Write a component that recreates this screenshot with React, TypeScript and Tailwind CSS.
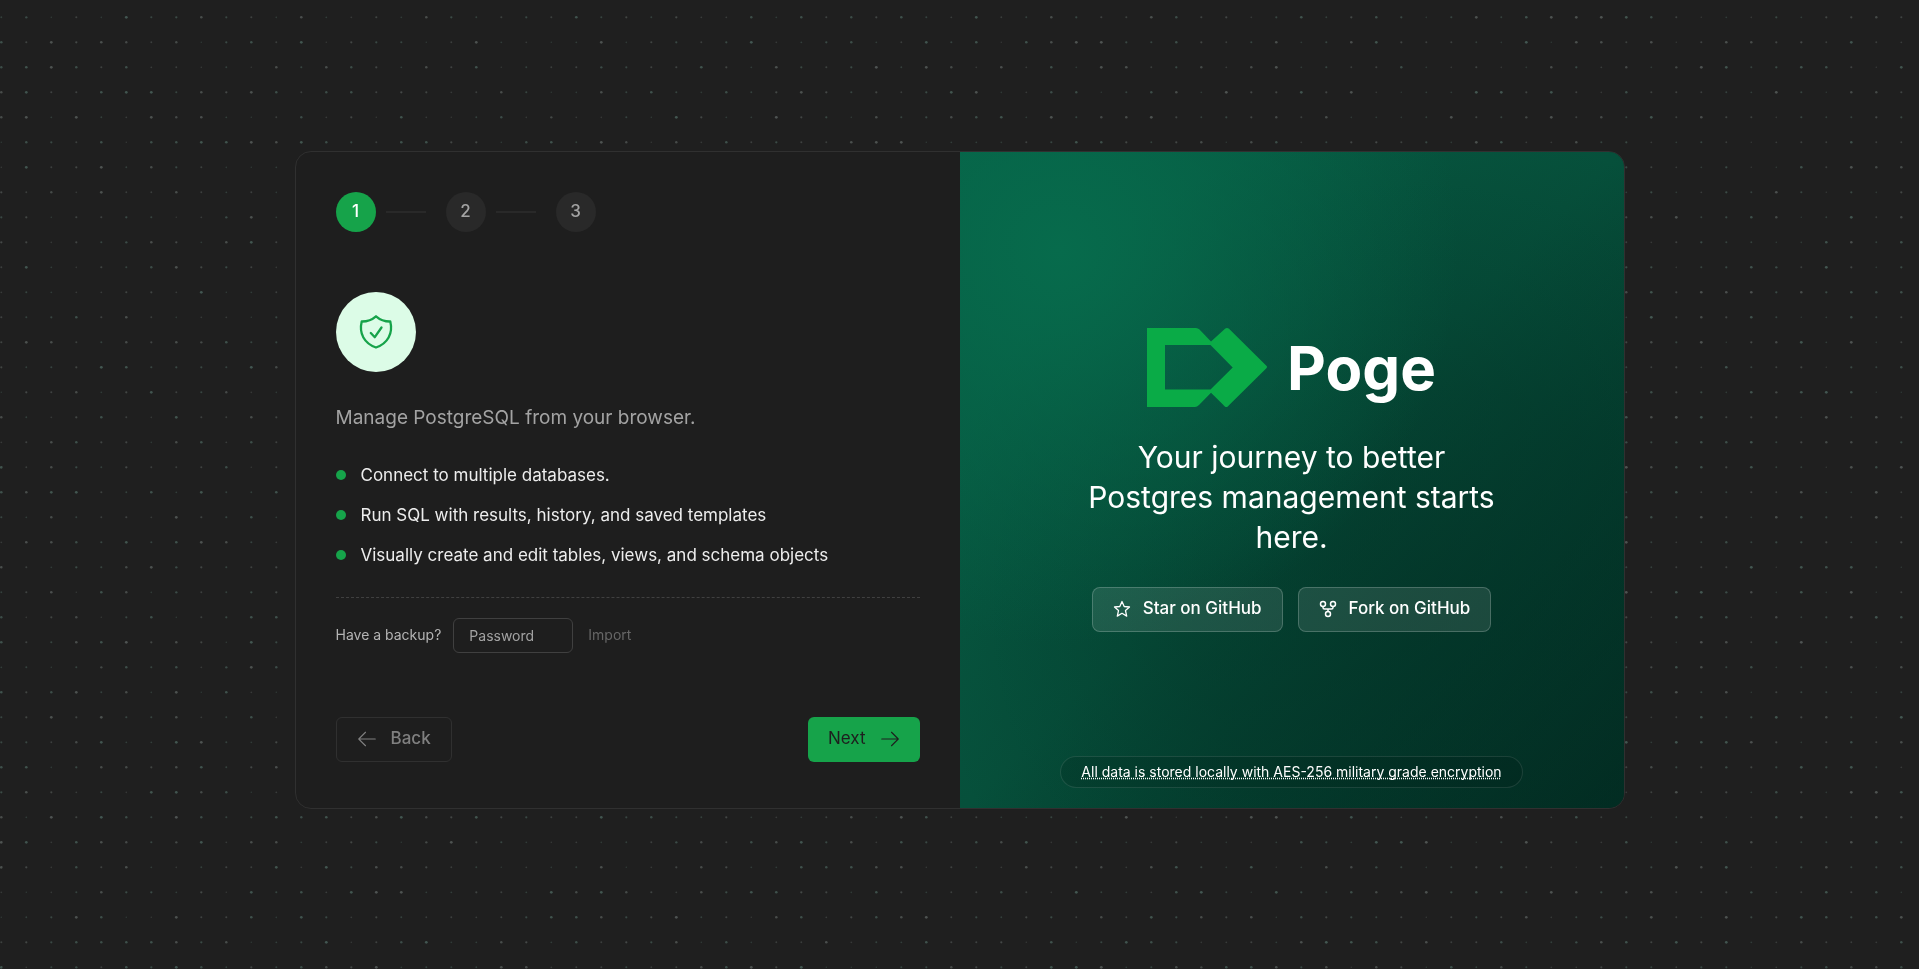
import { useEffect, useRef } from 'react';
import { PiArrowLeftLight, PiArrowRightLight } from 'react-icons/pi';

const steps = [1, 2, 3];

const features = [
    'Connect to multiple databases.',
    'Run SQL with results, history, and saved templates',
    'Visually create and edit tables, views, and schema objects',
];

const GAP = 25;

function DotGrid() {
    const ref = useRef<HTMLCanvasElement>(null);

    useEffect(() => {
        const draw = () => {
            const canvas = ref.current;
            const ctx = canvas?.getContext('2d');
            if (!canvas || !ctx) return;
            canvas.width = window.innerWidth;
            canvas.height = window.innerHeight;

            // small LCG so the field looks the same on every load
            let seed = 7;
            const rand = () => {
                seed = (seed * 1664525 + 1013904223) % 4294967296;
                return seed / 4294967296;
            };

            for (let y = 17; y < canvas.height; y += GAP) {
                for (let x = 1; x < canvas.width; x += GAP) {
                    const strength = rand();
                    ctx.fillStyle = rand() > 0.5 ? '#6a9488' : '#828d89';
                    ctx.globalAlpha = 0.22 + strength * 0.26;
                    ctx.beginPath();
                    ctx.arc(x + 0.3, y + 0.3, 0.8 + strength * 0.6, 0, Math.PI * 2);
                    ctx.fill();
                }
            }
        };
        draw();
        window.addEventListener('resize', draw);
        return () => window.removeEventListener('resize', draw);
    }, []);

    return <canvas ref={ref} aria-hidden="true" className="absolute inset-0 h-full w-full" />;
}

function ShieldIcon() {
    return (
        <svg viewBox="0 0 40 40" className="size-10" fill="none" stroke="#16a34a" strokeWidth="2.3" strokeLinecap="round" strokeLinejoin="round">
            <path d="M20 4.3c-4 3.500-8.800 5.300-14.300 5.200C2.800 21.500 8.300 31.500 20 35.500c11.700-4 17.200-14 14.300-26C28.800 9.600 24 7.800 20 4.300z" />
            <path d="M14.800 21l4 4.200 6.700-9.700" />
        </svg>
    );
}

function Logo() {
    return (
        <svg viewBox="0 0 120 80" className="h-20 w-30" fill="#0aab47">
            <path fillRule="evenodd" d="M0 0H49Q51 0 52.500 1.500L64 13.500 78 .8Q80 -.8 82 .8L119.400 37.800Q120.600 39 119.400 40.200L80.800 78.400Q79.300 79.800 77.800 78.400L64 64.800 52 77Q50 79 48 79H0V0zM18 17V61.500H63.500L85.700 39.500 63.500 17H18z" />
        </svg>
    );
}

function StarIcon() {
    return (
        <svg viewBox="0 0 18 18" className="size-[18px]" fill="none" stroke="currentColor" strokeWidth="1.300" strokeLinejoin="round">
            <path d="M9 1.500l2.200 5 5.300.5-4 3.600 1.200 5.500L9 13.300l-4.700 2.800 1.200-5.500-4-3.600 5.300-.5z" />
        </svg>
    );
}

function ForkIcon() {
    return (
        <svg viewBox="0 0 18 18" className="size-[18px]" fill="none" stroke="currentColor" strokeWidth="1.500" strokeLinecap="round">
            <circle cx="4" cy="4" r="2.500" />
            <circle cx="14" cy="4" r="2.500" />
            <circle cx="9" cy="14" r="2.500" />
            <path d="M4 6.500v1Q4 9 5.500 9h7Q14 9 14 7.500v-1M9 9v2.500" />
        </svg>
    );
}

export default function App() {
    return (
        <main className="relative flex min-h-screen items-center justify-center bg-[#1f1f1f] px-6 pt-10 pb-[50px] font-['Inter',sans-serif]">
            <DotGrid />

            <div className="relative grid w-full max-w-[1330px] grid-cols-2 overflow-hidden rounded-2xl border border-[#303030] bg-[#1e1e1e]">
                <section className="flex flex-col px-10 pt-10 pb-[46px]">
                    <ol className="flex items-center">
                        {steps.map((step) => (
                            <li key={step} className="flex items-center">
                                {step > 1 && <span className="mr-5 ml-2.5 h-0.5 w-10 bg-[#292929]" />}
                                <span
                                    className={`flex size-10 items-center justify-center rounded-full text-[17px] font-medium ${
                                        step === 1 ? 'bg-[#16a34a] text-white' : 'bg-[#292929] text-[#a3a3a3]'
                                    }`}
                                >
                                    {step}
                                </span>
                            </li>
                        ))}
                    </ol>

                    <div className="mt-15 flex size-20 items-center justify-center rounded-full bg-[#dcfce7]">
                        <ShieldIcon />
                    </div>

                    <p className="mt-8 text-[19px] leading-7 text-[#a3a3a3]">Manage PostgreSQL from your browser.</p>

                    <ul className="mt-[31px] flex flex-col gap-4">
                        {features.map((feature) => (
                            <li key={feature} className="flex items-center gap-[15px] text-[17px] leading-6 text-[#ededed]">
                                <span className="size-2.5 rounded-full bg-[#16a34a]" />
                                {feature}
                            </li>
                        ))}
                    </ul>

                    <div className="mt-[30px] flex items-center border-t border-dashed border-[#404040] pt-5 text-sm">
                        <label htmlFor="backup-password" className="text-[#b4b4b4]">
                            Have a backup?
                        </label>
                        <input
                            id="backup-password"
                            type="password"
                            placeholder="Password"
                            className="ml-3 h-[35px] w-30 rounded-md border border-[#404040] px-[15px] text-white placeholder:text-[#a3a3a3]"
                        />
                        <button type="button" disabled className="ml-[15px] text-[#666666]">
                            Import
                        </button>
                    </div>

                    <div className="mt-auto flex items-center justify-between pt-16 text-[17px]">
                        <button type="button" disabled className="flex h-[45px] items-center gap-3 rounded-md border border-[#303030] pr-5 pl-[18px] font-medium text-[#808080]">
                            <PiArrowLeftLight className="size-6" />
                            Back
                        </button>
                        <button type="button" className="flex h-[45px] items-center gap-3 rounded-md bg-[#16a34a] pr-[18px] pl-5 text-[#1e1e1e]">
                            Next
                            <PiArrowRightLight className="size-6" />
                        </button>
                    </div>
                </section>

                <section className="flex flex-col items-center bg-[radial-gradient(ellipse_at_15%_15%,#076b4c_0%,#076b4c80_22%,transparent_50%),radial-gradient(ellipse_at_70%_70%,#022c2280_0%,#022c2259_35%,transparent_75%),linear-gradient(135deg,#065f46_0%,#06503b_50%,#022c22_100%)] px-10 pt-[176px] pb-5 text-white">
                    <div className="flex items-center gap-5">
                        <Logo />
                        <h1 className="text-6xl font-bold">Poge</h1>
                    </div>
                    <p className="mt-[29px] max-w-[420px] text-center text-3xl leading-10">
                        Your journey to better Postgres management starts here.
                    </p>
                    <div className="mt-[30px] flex gap-[15px] text-[17px] font-medium">
                        <a href="#star" className="flex h-[45px] items-center gap-3 rounded-lg border border-white/20 bg-white/10 px-5">
                            <StarIcon />
                            Star on GitHub
                        </a>
                        <a href="#fork" className="flex h-[45px] items-center gap-3 rounded-lg border border-white/20 bg-white/10 px-5">
                            <ForkIcon />
                            Fork on GitHub
                        </a>
                    </div>
                    <a
                        href="#encryption"
                        className="mt-auto rounded-full border border-white/10 bg-black/10 px-5 py-[5px] text-sm underline decoration-dotted [text-decoration-skip-ink:none]"
                    >
                        All data is stored locally with AES-256 military grade encryption
                    </a>
                </section>
            </div>
        </main>
    );
}
